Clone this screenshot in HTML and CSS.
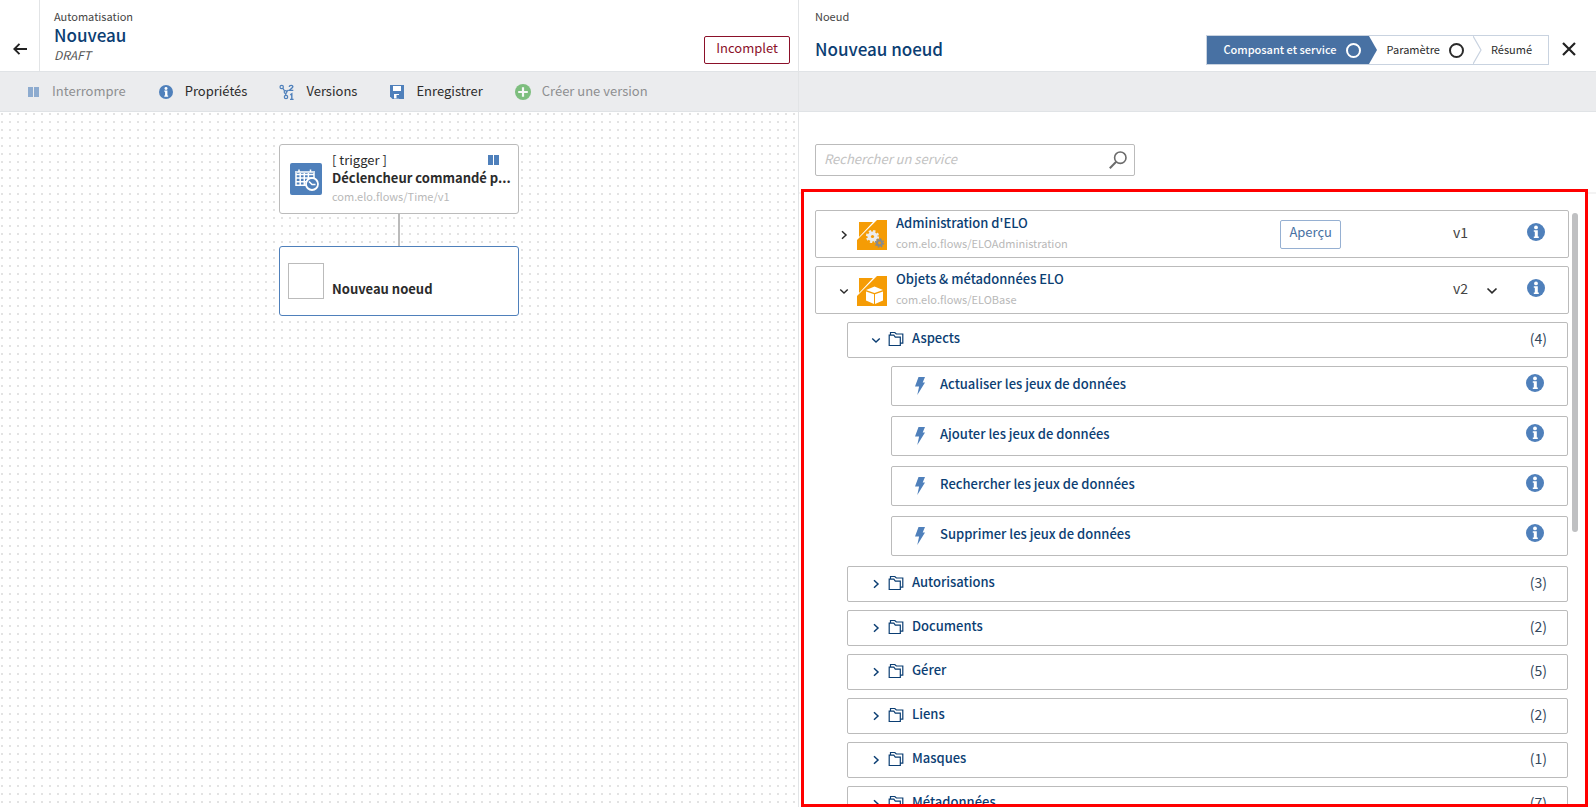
FILE: index.html
```html
<!DOCTYPE html>
<html lang="fr">
<head>
<meta charset="utf-8">
<title>Automatisation – Nouveau</title>
<link rel="stylesheet" href="styles.css">
</head>
<body>
<svg class="defs" width="0" height="0" aria-hidden="true">
  <symbol id="info" viewBox="0 0 18 18"><circle cx="9" cy="9" r="9" fill="#4f80bb"/><circle cx="9" cy="4.400" r="1.900" fill="#fff"/><path d="M6.800 7.200h4v6.300h1v1.500H6.800v-1.500h1V8.700h-1z" fill="#fff"/></symbol>
  <symbol id="right" viewBox="0 0 8 10"><path d="M2 1.200 6 5 2 8.800" fill="none" stroke="currentColor" stroke-width="1.500"/></symbol>
  <symbol id="down" viewBox="0 0 12 8"><path d="M1.500 1.500 6 5.800l4.500-4.300" fill="none" stroke="currentColor" stroke-width="1.700"/></symbol>
  <symbol id="folder" viewBox="0 0 16 16"><path d="M1.200 4.200h4.600l1.500 2h5v8.300H1.200zM2.500 3.500V1.500h4.300l1.500 1.500h6.500v9.200h-2" fill="none" stroke="currentColor" stroke-width="1.200"/></symbol>
  <symbol id="bolt" viewBox="0 0 10 18"><path d="M3.500 0H10L7.700 5.500H10L2.300 18l1.800-8.500H0z" fill="#4f80bb"/></symbol>
  <symbol id="pause" viewBox="0 0 12 10"><path d="M0 0h5v10H0zM6 0h5v10H6z" fill="#4f80bb"/></symbol>
</svg>
<div class="app">
  <main class="flow">
    <header class="head">
      <button class="back" aria-label="Retour"><svg width="14" height="12" viewBox="0 0 14 12"><path d="M14 6H1.500M6.500.8 1.300 6l5.200 5.200" fill="none" stroke="#222" stroke-width="1.900"/></svg></button>
      <div class="head-text">
        <span class="kicker">Automatisation</span>
        <h1 class="title">Nouveau</h1>
        <em class="state">DRAFT</em>
      </div>
      <button class="status">Incomplet</button>
    </header>
    <nav class="toolbar">
      <button class="tool" disabled><svg class="tool-icon" viewBox="0 0 16 16"><path d="M3 3h5v10H3zM9 3h5v10H9z" fill="#4f80bb"/></svg><span class="tool-label">Interrompre</span></button>
      <button class="tool"><svg class="tool-icon" viewBox="0 0 16 16"><use href="#info" x="1" y="1" width="14" height="14"/></svg><span class="tool-label">Propriétés</span></button>
      <button class="tool"><svg class="tool-icon" viewBox="0 0 16 16"><g fill="none" stroke="#4f80bb" stroke-width="1.200"><circle cx="2.700" cy="3" r="1.700"/><circle cx="6.500" cy="8" r="1.300"/><circle cx="7" cy="13" r="1.700"/><path d="M3.800 4.400 5.600 6.900M6.700 9.400V11.200M7.700 7.500l1.800-1.500"/><path d="M10.200 2.800c.3-2 3.900-1.900 3.600.1-.2 1.200-2.300 2-3.500 3.500h4M11.300 10.800l1.500-1v5.600M11 15.400h3.600" stroke-width="1.400"/></g></svg><span class="tool-label">Versions</span></button>
      <button class="tool"><svg class="tool-icon" viewBox="0 0 16 16"><path d="M1 1h14v14H3.500L1 12.500z" fill="#4f80bb"/><path d="M4 2h8v5H4zM5 10h5v4.500H5z" fill="#fff"/><path d="M7.500 11H10v3.500H7.500z" fill="#4f80bb"/></svg><span class="tool-label">Enregistrer</span></button>
      <button class="tool" disabled><svg class="tool-icon" viewBox="0 0 16 16"><circle cx="8" cy="8" r="8" fill="#35a035"/><path d="M8 3.200v9.600M3.200 8h9.600" stroke="#fff" stroke-width="2.200"/></svg><span class="tool-label">Créer une version</span></button>
    </nav>
    <section class="canvas">
      <article class="node">
        <svg class="node-icon" width="32" height="32" viewBox="0 0 32 32"><rect width="32" height="32" rx="2" fill="#4f80bb"/><path d="M5 9h20M5.500 11.500h19M5.500 15h19M5.500 18.700h16M5.500 22.300h12M6 10v13M10.200 10v13M14.300 10v13M18.400 10v8M24 10v6M9 6.500V9M20.500 6.500V9" stroke="#fff" stroke-width="1.500"/><circle cx="22" cy="21" r="6" fill="#4f80bb" stroke="#fff" stroke-width="1.800"/><path d="M19 18.500l3 3h3.500" fill="none" stroke="#fff" stroke-width="1.600"/></svg>
        <div class="node-text">
          <div class="node-top"><span>[ trigger ]</span><svg class="node-pause" width="12" height="10"><use href="#pause"/></svg></div>
          <strong class="node-name">Déclencheur commandé p...</strong>
          <span class="node-path">com.elo.flows/Time/v1</span>
        </div>
      </article>
      <div class="edge"></div>
      <article class="node node-selected">
        <span class="node-blank"></span>
        <div class="node-text node-text-new"><strong class="node-name">Nouveau noeud</strong></div>
      </article>
    </section>
  </main>

  <aside class="panel">
    <header class="head panel-head">
      <div class="panel-title">
        <span class="kicker">Noeud</span>
        <h2 class="title">Nouveau noeud</h2>
      </div>
      <ol class="steps">
        <li class="step step-on"><span class="step-label">Composant et service</span><i class="ring"></i></li>
        <li class="sep"><svg width="9" height="28" viewBox="0 0 9 28"><path d="M0 0 8 14 0 28z" fill="#4871a3"/></svg></li>
        <li class="step"><span class="step-label">Paramètre</span><i class="ring"></i></li>
        <li class="sep"><svg width="9" height="28" viewBox="0 0 9 28"><path d="M0 0 8 14 0 28" fill="none" stroke="#c9d3e0" stroke-width="1.200"/></svg></li>
        <li class="step"><span class="step-label">Résumé</span></li>
      </ol>
      <button class="close" aria-label="Fermer"><svg width="14" height="14" viewBox="0 0 14 14"><path d="M1 1l12 12M13 1 1 13" stroke="#222" stroke-width="2.200"/></svg></button>
    </header>
    <div class="toolbar"></div>
    <div class="search-row">
      <label class="search">
        <input class="search-input" type="text" placeholder="Rechercher un service" aria-label="Rechercher un service">
        <svg width="18" height="18" viewBox="0 0 18 18"><circle cx="11.300" cy="6.700" r="5.700" fill="none" stroke="#6b6b6b" stroke-width="1.600"/><path d="M7.200 10.800.8 17.200" stroke="#6b6b6b" stroke-width="2"/></svg>
      </label>
    </div>
    <div class="list-area">
      <div class="frame">
        <div class="list">
          <div class="service">
            <button class="twist" aria-label="Déplier"><svg width="8" height="10"><use href="#right"/></svg></button>
            <svg class="tile" viewBox="0 0 30 30"><path d="M2 2h14L2 17zM20 0h10v30H0V20z" fill="#f59c05"/><g fill="#ececec"><circle cx="15.500" cy="16.500" r="5"/><circle cx="15.500" cy="16.500" r="5.500" fill="none" stroke="#ececec" stroke-width="2.200" stroke-dasharray="2.300 2.020"/></g><circle cx="15.500" cy="16.500" r="1.600" fill="#f59c05"/><circle cx="22.500" cy="23" r="2.500" fill="none" stroke="#8a8a8a" stroke-width="2.200"/><circle cx="22.500" cy="23" r="4" fill="none" stroke="#8a8a8a" stroke-width="1.500" stroke-dasharray="1.600 1.540"/></svg>
            <div class="service-text"><span class="name">Administration d'ELO</span><span class="path">com.elo.flows/ELOAdministration</span></div>
            <button class="preview">Aperçu</button>
            <span class="version">v1</span><span class="pick"></span>
            <button class="info" aria-label="Informations"><svg width="18" height="18"><use href="#info"/></svg></button>
          </div>
          <div class="service">
            <button class="twist" aria-label="Replier"><svg width="10" height="7"><use href="#down"/></svg></button>
            <svg class="tile" viewBox="0 0 30 30"><path d="M2 2h14L2 17zM20 0h10v30H0V20z" fill="#f59c05"/><path d="M9 14l8.500-3.500L26 14l-8.500 3zM9 15.500l8 2.800V28l-8-3.500zM26 15.500l-8 2.800V28l8-3.500z" fill="#fff"/></svg>
            <div class="service-text"><span class="name">Objets &amp; métadonnées ELO</span><span class="path">com.elo.flows/ELOBase</span></div>
            <span class="version">v2</span>
            <button class="pick" aria-label="Choisir la version"><svg width="12" height="8"><use href="#down"/></svg></button>
            <button class="info" aria-label="Informations"><svg width="18" height="18"><use href="#info"/></svg></button>
          </div>
          <div class="groups">
            <button class="group"><span class="arrow"><svg width="10" height="7"><use href="#down"/></svg></span><svg class="folder" width="16" height="16"><use href="#folder"/></svg><span class="name">Aspects</span><span class="count">(4)</span></button>
            <div class="actions">
              <div class="action"><svg width="10" height="18"><use href="#bolt"/></svg><span class="name">Actualiser les jeux de données</span><button class="info" aria-label="Informations"><svg width="18" height="18"><use href="#info"/></svg></button></div>
              <div class="action"><svg width="10" height="18"><use href="#bolt"/></svg><span class="name">Ajouter les jeux de données</span><button class="info" aria-label="Informations"><svg width="18" height="18"><use href="#info"/></svg></button></div>
              <div class="action"><svg width="10" height="18"><use href="#bolt"/></svg><span class="name">Rechercher les jeux de données</span><button class="info" aria-label="Informations"><svg width="18" height="18"><use href="#info"/></svg></button></div>
              <div class="action"><svg width="10" height="18"><use href="#bolt"/></svg><span class="name">Supprimer les jeux de données</span><button class="info" aria-label="Informations"><svg width="18" height="18"><use href="#info"/></svg></button></div>
            </div>
            <button class="group"><span class="arrow"><svg width="8" height="10"><use href="#right"/></svg></span><svg class="folder" width="16" height="16"><use href="#folder"/></svg><span class="name">Autorisations</span><span class="count">(3)</span></button>
            <button class="group"><span class="arrow"><svg width="8" height="10"><use href="#right"/></svg></span><svg class="folder" width="16" height="16"><use href="#folder"/></svg><span class="name">Documents</span><span class="count">(2)</span></button>
            <button class="group"><span class="arrow"><svg width="8" height="10"><use href="#right"/></svg></span><svg class="folder" width="16" height="16"><use href="#folder"/></svg><span class="name">Gérer</span><span class="count">(5)</span></button>
            <button class="group"><span class="arrow"><svg width="8" height="10"><use href="#right"/></svg></span><svg class="folder" width="16" height="16"><use href="#folder"/></svg><span class="name">Liens</span><span class="count">(2)</span></button>
            <button class="group"><span class="arrow"><svg width="8" height="10"><use href="#right"/></svg></span><svg class="folder" width="16" height="16"><use href="#folder"/></svg><span class="name">Masques</span><span class="count">(1)</span></button>
            <button class="group"><span class="arrow"><svg width="8" height="10"><use href="#right"/></svg></span><svg class="folder" width="16" height="16"><use href="#folder"/></svg><span class="name">Métadonnées</span><span class="count">(7)</span></button>
          </div>
        </div>
        <div class="scroll"><div class="thumb"></div></div>
      </div>
    </div>
  </aside>
</div>
</body>
</html>
```
FILE: styles.css
```css
* { box-sizing: border-box; }
html, body { height: 100%; margin: 0; }
body {
  overflow: hidden;
  background: #fff;
  color: #2b2b2b;
  font: 13px/18px "Noto Sans CJK SC", "Noto Sans", sans-serif;
}
button { margin: 0; padding: 0; border: 0; background: none; color: inherit; font: inherit; text-align: left; }
svg { display: block; flex: none; }
.defs { position: absolute; }

.app { display: grid; grid-template-columns: 1fr 1fr; height: 100%; }
.flow, .panel { display: flex; flex-direction: column; min-width: 0; min-height: 0; }
.panel { border-left: 1px solid #e2e4e6; }

.head { display: flex; flex: none; height: 71px; }
.back { display: flex; align-items: flex-end; width: 40px; padding: 0 0 16px 13px; border-right: 1px solid #e2e4e6; }
.head-text { display: flex; flex-direction: column; flex: 1; padding: 7px 0 0 14px; }
.kicker { font-size: 11px; line-height: 18px; color: #444; }
.title { margin: 0; font-size: 17px; line-height: 20px; font-weight: 500; color: #0b3e73; }
.state { font-size: 12px; line-height: 20px; color: #555; }
.status { align-self: flex-start; height: 28px; margin: 36px 8px 0 0; padding: 0 11px 4px; border: 1px solid #8b1029; border-radius: 2px; color: #8b1029; }

.toolbar { display: flex; align-items: center; flex: none; gap: 32px; height: 41px; padding-left: 25px; background: #ebecee; border: solid #e0e3e6; border-width: 1px 0; }
.tool { display: flex; align-items: center; gap: 11px; white-space: nowrap; }
.tool:disabled { color: #8e8f91; }
.tool:disabled .tool-icon { opacity: 0.6; }
.tool-icon { width: 16px; height: 16px; }
.tool-label { padding-bottom: 2px; }

.canvas {
  display: flex; flex-direction: column; align-items: center; flex: 1; padding-top: 32px;
  background: radial-gradient(circle at 2px 2px, #e3e3e3 1px, transparent 1px) 0 0 / 8px 8px;
}
.node { display: flex; width: 240px; height: 70px; padding: 6px 8px 0 10px; border: 1px solid #bbb; border-radius: 3px; background: #fff; }
.node-selected { border-color: #4f80bb; padding-left: 8px; }
.node-icon { margin: 12px 10px 0 0; }
.node-text { display: flex; flex-direction: column; flex: 1; min-width: 0; }
.node-top { display: flex; justify-content: space-between; align-items: center; }
.node-pause { margin-right: 10px; }
.node-name { white-space: nowrap; font-weight: 700; }
.node-path { font-size: 11px; color: #b8b8b8; }
.node-blank { flex: none; width: 36px; height: 36px; margin: 10px 8px 0 0; border: 1px solid #bbb; }
.node-text-new { padding-top: 27px; }
.edge { width: 2px; height: 32px; background: #bbb; }

.panel-head { padding: 0 20px 0 16px; }
.panel-title { display: flex; flex-direction: column; flex: 1; gap: 14px; padding-top: 7px; }
.steps { display: flex; align-self: flex-start; height: 30px; margin: 35px 13px 0 0; padding: 0; border: 1px solid #c9d3e0; list-style: none; font-size: 11px; }
.step { display: flex; align-items: center; gap: 9px; padding: 0 16px 0 9px; }
.step-label { padding-bottom: 2px; }
.step:first-child { padding: 0 8px 0 16px; }
.step:nth-child(3) { padding-right: 9px; }
.step-on { background: #4871a3; color: #fff; font-weight: 500; }
.ring { width: 15px; height: 15px; border: 2px solid currentColor; border-radius: 50%; }
.close { align-self: flex-start; margin-top: 42px; }

.search-row { flex: none; height: 77px; padding: 32px 16px 0; }
.search { display: flex; align-items: center; width: 320px; height: 32px; padding: 0 7px 0 8px; border: 1px solid #bbb; border-radius: 2px; }
.search-input { flex: 1; min-width: 0; padding: 0 0 2px; border: 0; outline: 0; font: inherit; font-style: italic; }
.search-input::placeholder { color: #c2c2c2; opacity: 1; }

.list-area { display: flex; flex: 1; min-height: 0; padding: 0 8px 0 2px; background: linear-gradient(#f3f3f3, #f3f3f3) 0 3px / 100% 2px no-repeat; }
.frame { display: flex; flex: 1; min-width: 0; padding: 18px 7px 0 11px; border: 3px solid #f00; background: #fff; }
.list { display: flex; flex-direction: column; flex: 1; gap: 8px; min-width: 0; overflow: hidden; }
.scroll { flex: none; width: 9px; padding: 3px 0 0 3px; }
.thumb { width: 6px; height: 319px; border-radius: 3px; background: #bfc0c2; }

.service, .group, .action { display: flex; flex: none; align-items: center; border: 1px solid #bbb; border-radius: 2px; }
.service { height: 48px; padding-right: 23px; }
.twist { display: flex; justify-content: center; width: 16px; margin-left: 20px; padding-top: 2px; }
.tile { width: 30px; height: 30px; margin: 1px 9px 0 5px; }
.service-text { display: flex; flex-direction: column; flex: 1; gap: 2px; padding-bottom: 2px; }
.name { font-weight: 500; color: #0b3e73; }
.path { font-size: 11px; color: #b8b8b8; }
.preview { height: 29px; margin-right: 112px; padding: 0 8px 4px; border: 1px solid #96b0d2; border-radius: 2px; color: #4871a3; }
.version { width: 30px; padding-bottom: 4px; font-size: 14px; color: #444; }
.pick { display: flex; width: 44px; padding: 2px 0 0 3px; }
.info { display: flex; padding-bottom: 4px; }

.groups { display: flex; flex-direction: column; gap: 8px; padding: 0 1px 0 32px; }
.group { height: 36px; padding: 0 20px; color: #0b3e73; }
.arrow { display: flex; justify-content: center; width: 16px; margin-right: 4px; }
.folder { margin-bottom: 2px; }
.group .name { flex: 1; padding: 0 0 4px 8px; }
.count { padding-bottom: 4px; font-size: 14px; color: #33475b; }
.actions { display: flex; flex-direction: column; gap: 10px; padding: 0 0 2px 44px; }
.action { height: 40px; padding: 0 23px; }
.action .name { flex: 1; padding: 0 0 4px 15px; }
.action .info { padding-bottom: 6px; }
```
